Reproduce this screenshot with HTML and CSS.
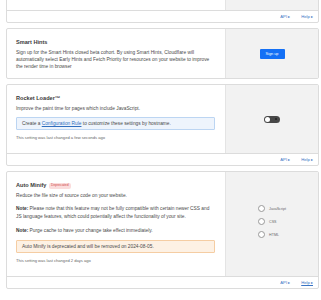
FILE: index.html
```html
<!DOCTYPE html>
<html lang="en">
<head>
    <meta charset="UTF-8">
    <meta name="viewport" content="width=device-width, initial-scale=1.0">
    <title>Speed - Optimization</title>
    <link rel="stylesheet" href="styles.css">
</head>
<body>
    <div class="page">
        <!-- Previous setting (scrolled out of view) -->
        <section class="card card-first">
            <div class="card-body">
                <div class="card-main"></div>
                <div class="card-side"></div>
            </div>
            <div class="card-footer">
                <a href="#" class="footer-link">API <span class="arrow">&#9656;</span></a>
                <a href="#" class="footer-link">Help <span class="arrow">&#9656;</span></a>
            </div>
        </section>

        <!-- Smart Hints -->
        <section class="card">
            <div class="card-body">
                <div class="card-main">
                    <h2 class="card-title">Smart Hints</h2>
                    <p class="card-text">Sign up for the Smart Hints closed beta cohort. By using Smart Hints, Cloudflare will automatically select Early Hints and Fetch Priority for resources on your website to improve the render time in browser</p>
                </div>
                <div class="card-side">
                    <button class="btn-primary">Sign up</button>
                </div>
            </div>
        </section>

        <!-- Rocket Loader -->
        <section class="card">
            <div class="card-body">
                <div class="card-main">
                    <h2 class="card-title">Rocket Loader™</h2>
                    <p class="card-text">Improve the paint time for pages which include JavaScript.</p>
                    <div class="info-box">Create a <a href="#" class="inline-link">Configuration Rule</a> to customize these settings by hostname.</div>
                    <p class="last-changed">This setting was last changed a few seconds ago</p>
                </div>
                <div class="card-side">
                    <span class="toggle"></span>
                </div>
            </div>
            <div class="card-footer">
                <a href="#" class="footer-link">API <span class="arrow">&#9656;</span></a>
                <a href="#" class="footer-link">Help <span class="arrow">&#9656;</span></a>
            </div>
        </section>

        <!-- Auto Minify -->
        <section class="card">
            <div class="card-body">
                <div class="card-main">
                    <h2 class="card-title">Auto Minify <span class="badge">Deprecated</span></h2>
                    <p class="card-text">Reduce the file size of source code on your website.</p>
                    <p class="card-text note"><b>Note:</b> Please note that this feature may not be fully compatible with certain newer CSS and JS language features, which could potentially affect the functionality of your site.</p>
                    <p class="card-text note"><b>Note:</b> Purge cache to have your change take effect immediately.</p>
                    <div class="warn-box">Auto Minify is deprecated and will be removed on 2024-08-05.</div>
                    <p class="last-changed">This setting was last changed 2 days ago</p>
                </div>
                <div class="card-side">
                    <div class="radio-list">
                        <label class="radio"><span class="radio-dot"></span>JavaScript</label>
                        <label class="radio"><span class="radio-dot"></span>CSS</label>
                        <label class="radio"><span class="radio-dot"></span>HTML</label>
                    </div>
                </div>
            </div>
            <div class="card-footer">
                <a href="#" class="footer-link">API <span class="arrow">&#9656;</span></a>
                <a href="#" class="footer-link underline">Help <span class="arrow">&#9656;</span></a>
            </div>
        </section>

        <!-- Next setting -->
        <section class="card card-next">
            <div class="card-body">
                <div class="card-main"></div>
                <div class="card-side"></div>
            </div>
        </section>
    </div>
</body>
</html>
```

FILE: styles.css
```css
/* Reset */
body, html {
    margin: 0;
    padding: 0;
    font-family: "Liberation Sans", Arial, sans-serif;
    background: #fff;
    color: #4a4a4a;
}

/* Page */
.page {
    display: flex;
    flex-direction: column;
    gap: 5px;
    margin-top: -30px;
    padding-left: 6px;
    width: 313px;
}

/* Cards */
.card {
    border: 1px solid #dcdcdc;
    border-radius: 2px;
    background: #fff;
}

.card-body {
    display: flex;
}

.card-main {
    width: 199px;
    padding: 9px 10px 8px 9px;
}

.card-side {
    flex: 1;
    background: #f2f2f2;
    border-left: 1px solid #e4e4e4;
    display: flex;
    align-items: center;
    justify-content: center;
}

.card-first .card-main {
    height: 22px;
}

.card-next {
    margin-top: 6px;
}

.card-next .card-main {
    height: 20px;
}

/* Text */
.card-title {
    margin: 0;
    font-size: 5.6px;
    line-height: 9px;
    font-weight: bold;
    color: #3a3a3a;
}

.card-text {
    margin: 2px 0 0;
    font-size: 4.8px;
    line-height: 7px;
}

.card-text.note {
    margin-top: 6px;
    line-height: 8px;
}

.card-text b {
    font-weight: bold;
    color: #333;
}

.badge {
    display: inline-block;
    vertical-align: 1px;
    margin-left: 1px;
    padding: 0 2px;
    border-radius: 2px;
    background: #fbdcdc;
    color: #d04848;
    font-size: 3.4px;
    line-height: 5.5px;
    font-weight: normal;
}

.last-changed {
    margin: 5px 0 5px;
    font-size: 4.1px;
    line-height: 5px;
    color: #666;
}

/* Callouts */
.info-box,
.warn-box {
    margin-top: 5px;
    padding: 0 5px;
    border-radius: 1px;
    font-size: 4.8px;
    line-height: 11px;
}

.info-box {
    background: #eef4fc;
    border: 1px solid #bcd5f2;
}

.warn-box {
    background: #fdf1e4;
    border: 1px solid #f5cda3;
}

.inline-link {
    color: #2f6dbd;
    text-decoration: underline;
}

/* Controls */
.btn-primary {
    border: none;
    border-radius: 1px;
    background: #1470f5;
    color: #fff;
    font-family: inherit;
    font-size: 3.8px;
    width: 25px;
    height: 10px;
    padding: 0;
}

.toggle {
    position: relative;
    display: block;
    width: 16px;
    height: 7px;
    border-radius: 4px;
    background: #484848;
}

.toggle::before {
    content: "";
    position: absolute;
    left: 1px;
    top: 1px;
    width: 5px;
    height: 5px;
    border-radius: 50%;
    background: #fff;
}

.toggle::after {
    content: "";
    position: absolute;
    right: 3px;
    top: 2.5px;
    width: 2px;
    height: 2px;
    border-radius: 50%;
    background: #222;
}

.radio-list {
    display: flex;
    flex-direction: column;
    gap: 6px;
    margin-top: -5px;
}

.radio {
    display: flex;
    align-items: center;
    gap: 4px;
    font-size: 3.6px;
    color: #666;
}

.radio-dot {
    width: 5px;
    height: 5px;
    border-radius: 50%;
    border: 0.6px solid #999;
    background: #fff;
}

/* Footer */
.card-footer {
    display: flex;
    justify-content: flex-end;
    gap: 11px;
    padding: 0 5px;
    height: 11px;
    align-items: center;
    border-top: 1px solid #dcdcdc;
}

.footer-link {
    color: #3a74c4;
    font-size: 4.2px;
    text-decoration: none;
}

.footer-link.underline {
    text-decoration: underline;
}

.arrow {
    font-size: 3.6px;
}
```
